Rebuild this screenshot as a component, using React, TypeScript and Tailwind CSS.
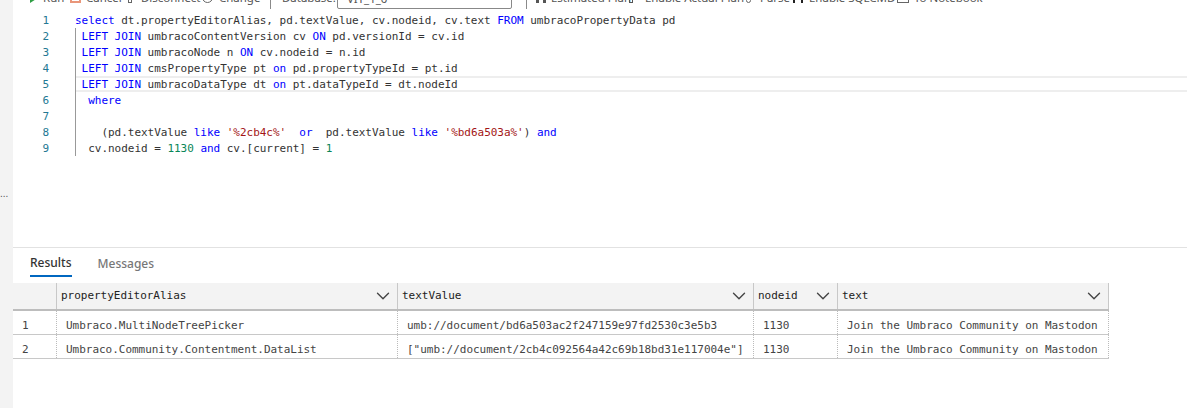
import { ChevronDown } from "lucide-react"

const kw = "text-[#0000ff]"
const str = "text-[#a31515]"
const num = "text-[#098658]"

function K({ children }: { children: string }) {
  return <span className={kw}>{children}</span>
}

function EditorLine({ n, active, children }: { n: number; active?: boolean; children?: React.ReactNode }) {
  return (
    <div className="flex h-4">
      <div className="w-[36px] text-right leading-[18px] text-[#237893]">{n}</div>
      <div className="w-[26px]" />
      <div className={`h-4 flex-1 whitespace-pre ${active ? "border-y-2 border-[#eeeeee] leading-[14px]" : "leading-[18px]"}`}>
        {children}
      </div>
    </div>
  )
}

function HeaderCell({ label, className }: { label: string; className: string }) {
  return (
    <div className={`flex items-center justify-between border-r border-[#c8c8c8] pl-1 pr-[3px] ${className}`}>
      <span>{label}</span>
      <ChevronDown className="h-[22px] w-[22px] text-[#444444]" strokeWidth={1.5} />
    </div>
  )
}

function Row({ n, alias, value }: { n: number; alias: string; value: string }) {
  return (
    <div className="flex h-6 items-center border-b border-[#c8c8c8] text-[#444444]">
      <div className="h-full w-[44px] border-r border-dotted border-[#bbbbbb] pl-[9px] leading-[29px]">{n}</div>
      <div className="h-full w-[341px] border-r border-dotted border-[#bbbbbb] pl-[9px] leading-[29px]">{alias}</div>
      <div className="h-full w-[356px] border-r border-dotted border-[#bbbbbb] pl-[9px] leading-[29px] whitespace-pre">{value}</div>
      <div className="h-full w-[84px] border-r border-dotted border-[#bbbbbb] pl-[9px] leading-[29px]">1130</div>
      <div className="h-full w-[271px] border-r border-dotted border-[#bbbbbb] pl-[9px] leading-[29px]">Join the Umbraco Community on Mastodon</div>
    </div>
  )
}

function Toolbar() {
  return (
    <div className="h-3 overflow-hidden font-['Noto_Sans',sans-serif] text-[11.5px] leading-[13px] text-[#555555]">
      <div className="-mt-[9px] flex h-[18px] items-start whitespace-nowrap">
        <svg className="ml-[17px] mt-[3px] h-[9px] w-[7px]" viewBox="0 0 7 9">
          <path d="M0 0l7 4.5L0 9z" fill="#2f9e44" />
        </svg>
        <span className="ml-[6px] w-[20px]">Run</span>
        <span className="ml-[7px] h-[12px] w-[11px] border-2 border-[#e9967a]" />
        <span className="ml-[5px] w-[32px]">Cancel</span>
        <span className="ml-[10px] mt-[7px] h-[5px] w-[4px] border border-[#666666]" />
        <span className="ml-[9px] w-[53px]">Disconnect</span>
        <span className="ml-[8px] h-[12px] w-[11px] rounded-full border border-[#666666]" />
        <span className="ml-[6px] w-[34px]">Change</span>
        <span className="ml-[17px] h-[18px] w-px bg-[#8a8a8a]" />
        <span className="ml-[11px] w-[52px]">Database:</span>
        <span className="ml-[3px] h-[18px] w-[175px] rounded-[2px] border border-[#888888] pl-[9px]">VIT_1_0</span>
        <span className="ml-[14px] h-[18px] w-px bg-[#8a8a8a]" />
        <span className="ml-[9px] mt-[6px] h-[6px] w-[10px] border-x-[3px] border-[#555555]" />
        <span className="ml-[5px] w-[69px]">Estimated Plan</span>
        <span className="ml-[9px] mt-[6px] h-[6px] w-[4px] border border-[#555555]" />
        <span className="ml-[12px] w-[88px]">Enable Actual Plan</span>
        <span className="ml-[13px] mt-[7px] h-[5px] w-[5px] rounded-full border border-[#666666]" />
        <span className="ml-[9px] w-[24px]">Parse</span>
        <span className="ml-[9px] mt-[8px] h-[4px] w-[10px] border-x-2 border-[#222222]" />
        <span className="ml-[6px] w-[75px]">Enable SQLCMD</span>
        <span className="ml-[13px] h-[12px] w-[12px] border border-[#666666]" />
        <span className="ml-[5px] w-[62px]">To Notebook</span>
      </div>
    </div>
  )
}

export default function App() {
  return (
    <div className="flex h-[408px] w-[1187px] overflow-hidden bg-white font-['DejaVu_Sans_Mono',monospace] text-[11px] tracking-[-0.025px] text-[#333333]">
      <div className="relative w-[13px] shrink-0 bg-[#f3f3f3]">
        <span className="absolute left-0 top-[186px] font-['Liberation_Sans',sans-serif] text-[10px] leading-[16px] text-[#555555]">...</span>
      </div>

      <div className="flex min-w-0 flex-1 flex-col">
        <Toolbar />

        <div className="relative">
          <div className="absolute left-[62px] top-4 h-[128px] w-px bg-[#999999]" />
          <EditorLine n={1}>
            <K>select</K> dt.propertyEditorAlias, pd.textValue, cv.nodeid, cv.text <K>FROM</K> umbracoPropertyData pd
          </EditorLine>
          <EditorLine n={2}>
            {" "}<K>LEFT</K> <K>JOIN</K> umbracoContentVersion cv <K>ON</K> pd.versionId = cv.id
          </EditorLine>
          <EditorLine n={3}>
            {" "}<K>LEFT</K> <K>JOIN</K> umbracoNode n <K>ON</K> cv.nodeid = n.id
          </EditorLine>
          <EditorLine n={4}>
            {" "}<K>LEFT</K> <K>JOIN</K> cmsPropertyType pt <K>on</K> pd.propertyTypeId = pt.id
          </EditorLine>
          <EditorLine n={5} active>
            {" "}<K>LEFT</K> <K>JOIN</K> umbracoDataType dt <K>on</K> pt.dataTypeId = dt.nodeId
          </EditorLine>
          <EditorLine n={6}>
            {"  "}<K>where</K>
          </EditorLine>
          <EditorLine n={7} />
          <EditorLine n={8}>
            {"    "}(pd.textValue <K>like</K> <span className={str}>'%2cb4c%'</span>{"  "}<K>or</K>{"  "}pd.textValue <K>like</K> <span className={str}>'%bd6a503a%'</span>) <K>and</K>
          </EditorLine>
          <EditorLine n={9}>
            {"  "}cv.nodeid = <span className={num}>1130</span> <K>and</K> cv.[current] = <span className={num}>1</span>
          </EditorLine>
        </div>

        <div className="mt-[91px] border-t border-[#e2e2e2]" />

        <div className="flex h-[35px] items-start font-['Noto_Sans',sans-serif] text-[12px] tracking-normal">
          <div className="ml-[17px] mt-[6px] h-[23px] border-b-2 border-[#0067c0] font-medium leading-[17px] text-[#333333]">Results</div>
          <div className="ml-[26px] mt-[7px] font-medium leading-[17px] text-[#777777]">Messages</div>
        </div>

        <div className="w-[1096px]">
          <div className="flex h-[28px] border-b-[2px] border-[#bdbdbd] bg-[#f3f3f3] text-[#222222]">
            <div className="w-[44px] border-r border-[#c8c8c8]" />
            <HeaderCell label="propertyEditorAlias" className="w-[341px]" />
            <HeaderCell label="textValue" className="w-[356px]" />
            <HeaderCell label="nodeid" className="w-[84px]" />
            <HeaderCell label="text" className="w-[271px]" />
          </div>
          <Row n={1} alias="Umbraco.MultiNodeTreePicker" value="umb://document/bd6a503ac2f247159e97fd2530c3e5b3" />
          <Row n={2} alias="Umbraco.Community.Contentment.DataList" value={'["umb://document/2cb4c092564a42c69b18bd31e117004e"]'} />
        </div>
      </div>
    </div>
  )
}
